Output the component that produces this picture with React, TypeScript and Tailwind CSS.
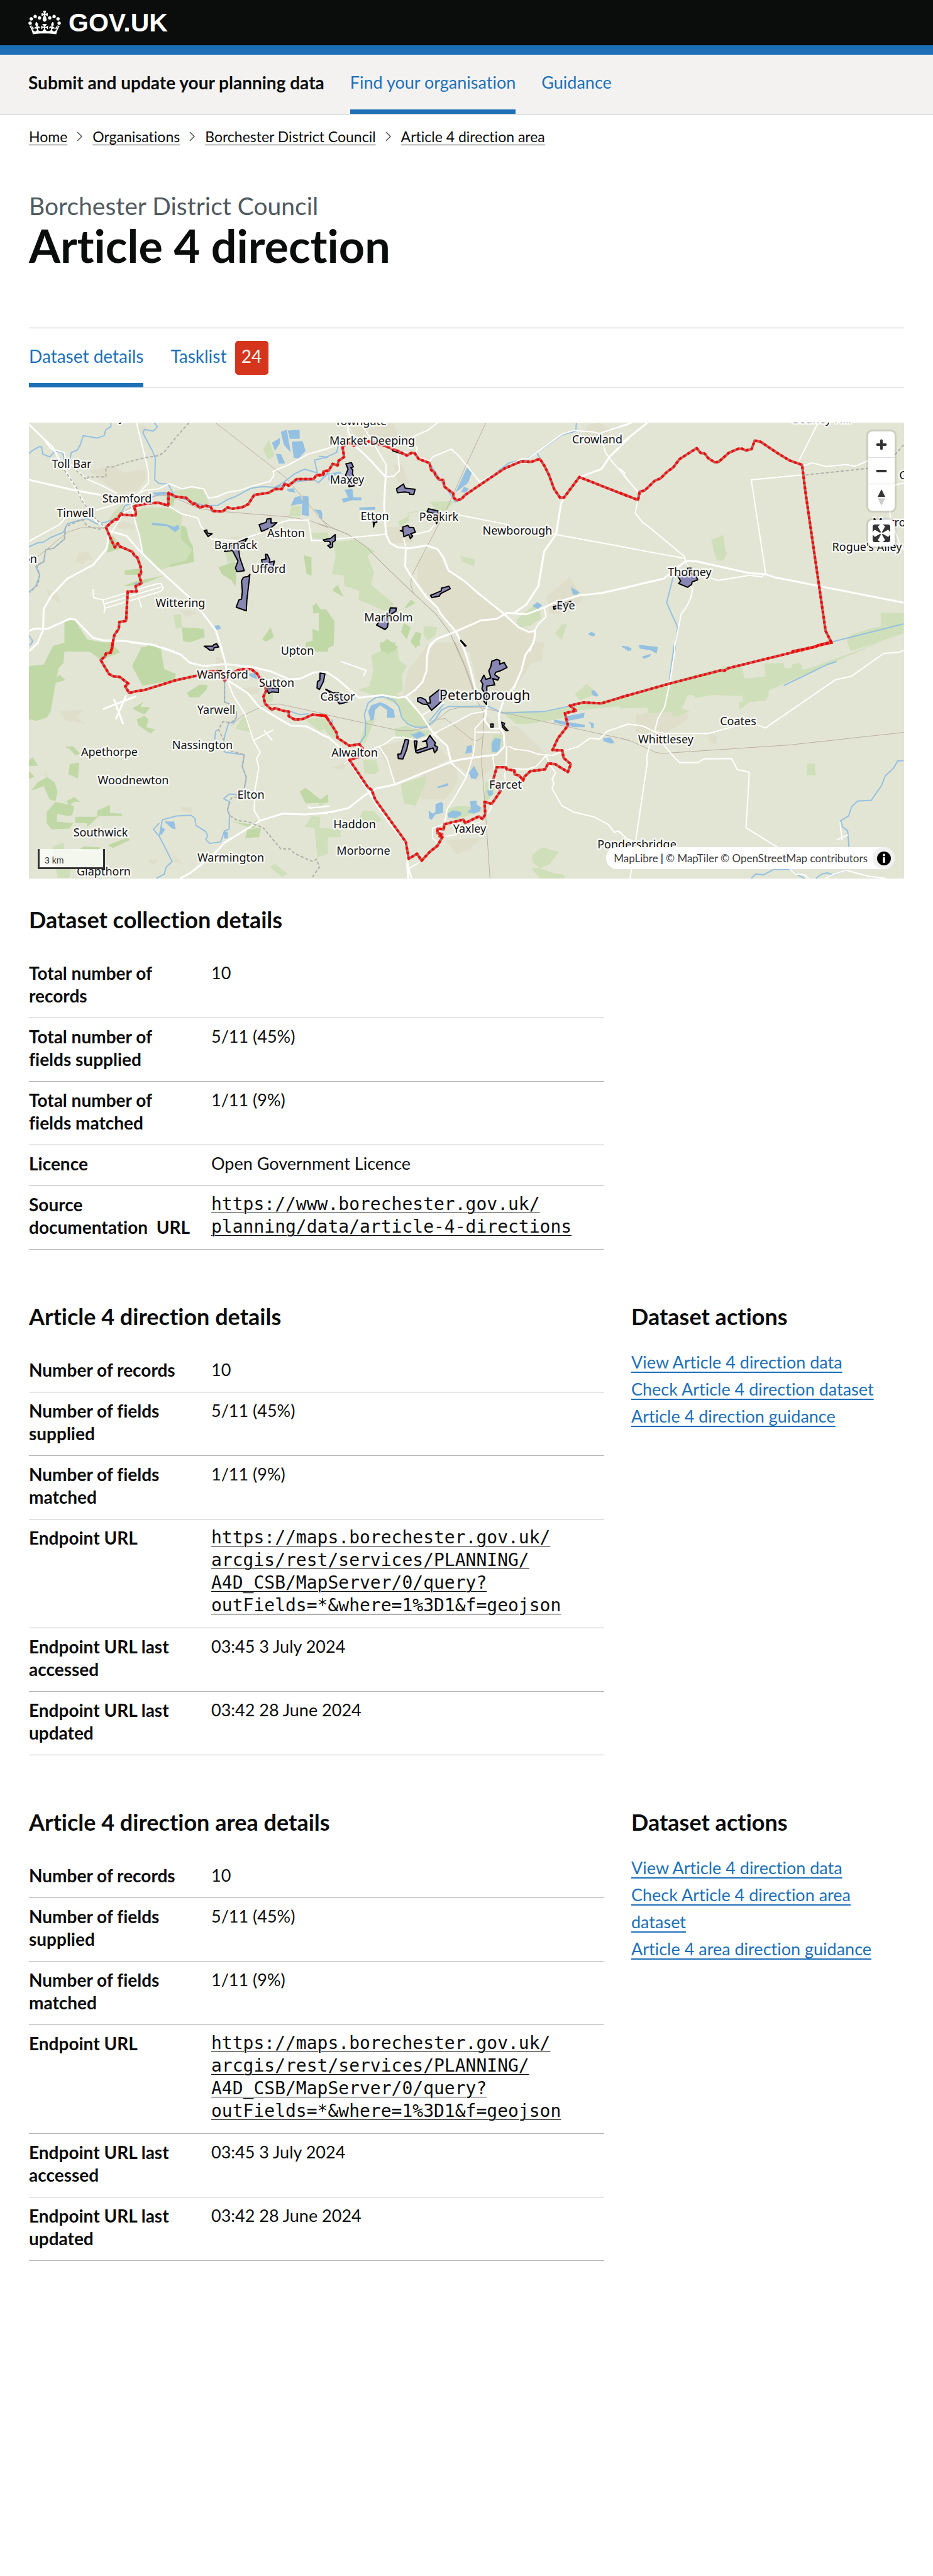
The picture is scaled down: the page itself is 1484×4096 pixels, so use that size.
import React from "react";

type Layer = "town" | "meadow" | "wood" | "water" | "river" | "rail" | "minor" | "major" | "path" | "boundaryBase" | "boundary" | "area";
type Tile = { matrix: string; shapes: Partial<Record<Layer, string>> };

const TILES: Tile[] = [
  {
    matrix: "matrix(.3144 0 0 .2417 -17.4 -13)",
    shapes: {
      town: "M360 370 480 340 540 385 640 360 650 420 600 500 500 510 430 440Z M480 730 540 700 590 730 590 760 520 750Z M310 910 355 905 380 960 340 960 330 990 290 965Z M1040 820 1110 800 1150 830 1080 850Z M820 1290 890 1290 905 1310 850 1335Z M145 1150 200 1170 215 1240 150 1190Z M600 60 650 80 660 120 615 120Z",
      meadow: "M590 640 640 610 760 615 830 660 825 740 865 820 885 870 860 965 765 1005 715 1025 640 930 610 760Z M780 510 850 485 935 490 970 590 900 610 840 540Z M485 640 530 590 520 660 450 710Z M1240 230 1270 165 1298 270 1265 300Z M1385 600 1430 600 1430 670 1370 670Z M1045 900 1085 880 1110 960 1060 975Z M785 1320 825 1315 830 1400 800 1410Z M1485 780 1568 775 1568 825 1490 815Z",
      wood: "M825 730 850 740 865 820 885 870 890 970 765 1005 770 985 850 960 880 890 825 820Z M455 810 480 800 525 880 450 910Z M540 1025 610 1015 615 1055 540 1055Z M530 1130 600 1095 740 1060 640 1110 560 1130Z M235 1360 285 1350 350 1480 470 1510 515 1560 180 1560 235 1510Z M1015 1005 1100 965 1105 1080 1100 1135 1080 1090 1030 1050Z M830 1400 940 1410 945 1465 870 1500 835 1490Z M1235 1480 1278 1400 1295 1465 1255 1495Z M1445 925 1485 940 1485 1060 1460 1050Z M1490 1260 1510 1240 1540 1300 1495 1310Z M1490 1410 1568 1450 1568 1560 1460 1560 1455 1500 1490 1490Z M625 1560 660 1515 720 1530 720 1560Z M745 540 795 550 785 600 765 600Z",
      water: "M1330 115 1360 100 1380 250 1345 200Z M1365 105 1425 100 1425 160 1375 160Z M1385 180 1440 175 1455 240 1420 290 1395 285Z M1285 185 1325 155 1325 190 1300 240Z M1305 260 1330 260 1352 322 1320 325Z M1360 490 1395 485 1403 515 1365 505Z M1400 545 1430 535 1440 585 1380 600Z M1440 535 1470 540 1472 670 1435 660Z M1498 625 1535 630 1540 685Z M675 712 745 720 790 740 810 725 818 750 795 775 755 735 680 728Z M680 515 740 508 785 520 780 530 690 528Z M588 1110 635 1100 610 1130 590 1125Z M995 1390 1018 1385 1027 1410 1002 1418Z",
      river: "M55 260 75 235 110 210 120 215 125 260 160 280 190 240 225 250 235 300 M470 55 470 80 445 100 435 140 400 155 330 140 315 200 300 235 270 250 262 300 M690 55 705 80 685 110 640 98 632 120 655 180 680 240 695 290 692 430 715 455 760 458 785 520 M55 870 100 845 130 840 165 810 230 775 250 720 300 700 350 685 400 720 440 710 510 680 540 600 600 575 740 515 785 520 800 540 870 570 940 600 1010 598 1060 560 1100 540 1180 485 1240 475 1300 480 1340 450 1400 390 1450 360 1515 385 1500 300 1568 280 M1300 480 1420 440 1500 430 1520 450 1568 380 M55 1455 75 1490 60 1520 M240 740 235 820 180 880 140 890 130 970 90 1000 110 1060 90 1130 55 1170",
      rail: "M1000 55 1350 410 1568 740 M100 935 250 775 320 745 440 745 520 650 600 590 700 535 760 530 920 620 1000 635 1380 675 1480 700 1568 745",
      minor: "M130 160 165 225 235 250 240 300 350 425 420 465 500 520 M395 630 520 580 640 500 710 490 765 455 830 490 880 475 940 490 965 550 1010 540 1060 512 1120 500 1200 465 1275 440 1295 400 1290 375 1370 330 1470 260 1568 225 M600 55 635 240 660 380 660 450 610 520 570 560 580 640 600 740 615 800 630 915 M760 600 830 655 910 680 925 735 980 820 1110 830 1230 780 1260 740 1370 695 1470 695 1485 830 1568 830 M55 835 210 725 240 680 M470 780 540 640 590 620 M440 1245 725 1135 M430 1220 700 1115 725 1112 735 1145 720 1165 440 1275 M380 1150 382 1205 430 1220 440 1275 435 1310 M610 1210 625 1270",
      major: "M55 65 175 215 210 300 300 500 350 620 395 700 470 770 500 780 550 800 610 890 720 1030 860 1195 930 1300 1000 1420 1035 1560 M55 430 290 500 420 530 M460 790 450 880 380 990 250 1080 170 1190 130 1280 127 1420 100 1500 60 1555 M55 1425 80 1410 150 1410 260 1345 290 1350 380 1470 430 1485 540 1490 680 1515 790 1560",
      path: "M865 55 830 105 800 150 745 240 715 270 640 285 550 315 480 345 445 345 445 410 355 412 350 430 270 340 M235 365 300 490 320 560 380 670 440 745 410 755 350 735 325 690 240 740 235 820 180 880 140 890 130 970 95 990 110 1060 100 1120 60 1170",
      boundary: "M470 1560 480 1500 488 1450 510 1410 513 1365 547 1358 555 1165 600 1165 595 1130 625 1110 612 1055 623 1050 620 1000 603 940 590 930 578 903 515 868 505 848 490 875 470 820 445 742 490 690 505 690 520 650 530 660 595 665 597 640 585 605 650 587 710 580 760 600 762 515 795 540 850 548 885 590 895 585 920 613 950 600 975 610 985 635 1035 638 1060 612 1085 620 1135 610 1165 590 1195 530 1270 515 1300 490 1335 490 1350 455 1370 468 1410 425 1495 425 1510 400 1545 395 1550 372 1568 372",
      area: "M1220 725 1255 710 1260 688 1280 685 1280 715 1310 712 1285 740 1232 770Z M942 765 955 760 958 780 982 785 962 803Z M1100 850 1160 815 1150 835 1120 850 1115 880 1122 940 1145 1028 1108 1034 1100 1010 1113 965 1085 895 1045 902 1050 880Z M1173 1052 1158 1220 1155 1292 1104 1268 1118 1220 1131 1215 1135 1165 1131 1095 1140 1072 1165 1065Z M1252 920 1262 922 1274 955 1272 972 1297 965 1290 1010 1270 1030 1240 1000 1232 957 1255 952Z M942 1525 985 1525 990 1515 1005 1508 1015 1530 992 1535 990 1550 970 1550 955 1535Z",
    },
  },
  {
    matrix: "matrix(.3144 0 0 .2417 461.1 -13)",
    shapes: {
      town: "M150 60 380 60 400 130 460 170 450 210 390 200 250 170 180 130Z M380 330 420 330 460 460 400 450Z M1360 70 1420 55 1470 90 1440 200 1370 210 1340 160Z M340 740 420 740 480 800 470 840 360 850Z M500 960 560 890 600 890 650 1030 740 1100 940 1320 900 1345 820 1350 690 1420 600 1270 500 1100Z M690 1430 820 1360 940 1330 1090 1430 1090 1560 740 1560Z M1150 1200 1270 1070 1340 1210 1260 1310 1170 1310Z",
      meadow: "M75 840 180 825 285 900 245 930 260 975 280 1040 265 1120 375 1240 375 1290 330 1290 200 1220 205 1160 130 1130 125 1060 65 1050 85 940Z M555 575 690 570 640 640 580 625 455 650 455 700 410 740 400 705 450 670 450 645 590 615Z M715 930 790 955 785 1000 725 970Z M1000 1350 1110 1230 1125 1340 1070 1390 1010 1400Z M1195 1440 1230 1380 1255 1380 1230 1485Z M530 1390 600 1400 590 1450 550 1490 530 1450Z M0 775 50 790 0 820Z",
      wood: "M70 1150 95 1120 125 1200 75 1165Z M435 1270 465 1220 490 1240 440 1275Z M0 1280 35 1280 80 1360 75 1520 0 1560Z M415 1430 430 1370 465 1400 445 1480Z M465 1490 490 1430 520 1440 510 1500 490 1540Z M310 1520 345 1475 400 1530 380 1560 315 1560Z",
      water: "M690 515 750 350 775 380 755 450 720 485Z M720 510 735 475 760 490 740 515Z M130 495 170 490 175 545 215 545 215 565 165 565 125 580 115 555 148 545Z M205 612 285 607 285 628 205 628Z M0 625 18 650 15 690 0 670Z M50 390 110 375 115 390 60 410 55 445 48 430Z M1275 1135 1320 1170 1305 1185 1285 1185Z M1080 1260 1105 1235 1130 1255 1110 1280Z M1365 1440 1380 1430 1400 1445 1390 1462 1365 1450Z M1535 1525 1568 1530 1568 1560Z",
      river: "M1303 55 1300 110 1230 135 1110 245 1055 290 960 320 860 420 740 530 M1105 255 1118 290 M0 275 40 280 90 250 100 200 M0 445 50 385 M560 320 640 480 680 550 690 575 720 560",
      rail: "M845 55 740 350 640 640 470 1060 465 1120 480 1180 M0 675 60 740 150 790 240 870 330 990 470 1165 590 1310 660 1430 705 1560 M0 718 80 755 150 790 240 872 330 992 470 1167 592 1312 662 1432 707 1560",
      minor: "M0 240 90 205 M230 90 290 220 340 330 340 412 380 405 408 370 400 240 450 250 M600 55 550 105 460 155 M495 210 495 240 500 280 560 310 575 280 670 228 710 275 815 445 1020 295 1060 290 1230 130 1290 105 1385 115 1420 125 1450 250 1490 320 1545 400 1568 440 M1420 125 1500 90 1568 65 M700 660 960 725 M1180 785 1568 878 M590 720 560 765 500 785 430 790 430 820 440 875 M0 830 340 788 M1140 1270 1150 1330 1110 1380 1090 1425",
      major: "M145 55 150 120 180 200 260 300 338 412 330 600 340 790 360 845 400 875 460 880 545 862 600 885 630 940 655 1025 740 1100 805 1175 940 1315 1010 1400 1060 1430 1095 1425 1090 1480 1065 1560 M440 880 437 1000 465 1060 540 1195 600 1270 615 1310 695 1430 740 1560 M550 1560 565 1510 600 1475 690 1430 820 1355 900 1345 950 1305 1050 1315 1140 1270 1190 1240 1320 1190 1430 1175 1568 1135 M1568 155 1470 280 1430 360 1385 380 1318 415 M1240 545 1225 590 1200 790 1140 900 1125 1020 1110 1130 1050 1250 990 1305",
      boundary: "M0 400 20 398 25 372 50 370 70 325 95 335 100 305 128 280 120 215 150 185 175 205 250 178 330 205 400 240 445 270 470 252 485 255 505 292 560 320 568 365 585 380 590 400 610 430 630 430 635 475 680 520 683 550 700 565 722 555 740 530 870 415 940 355 1025 308 1075 312 1118 292 1142 340 1165 400 1190 490 1220 547 1240 547 1318 412 1568 540",
      area: "M137 325 165 317 175 345 162 350 172 365 170 390 180 420 178 470 153 475 150 420 135 400 148 360Z M393 490 428 457 437 485 487 492 480 527 460 525 458 515 435 510 398 515Z M555 620 603 635 605 700 595 718 580 650 548 640Z M275 700 295 690 293 710 282 712 277 740Z M412 765 425 762 425 740 450 730 458 743 480 745 488 775 465 785 475 800 463 817 455 790 430 805 427 772Z M22 825 60 815 83 790 83 830 70 840 70 870 58 878 45 862 60 855 55 835 30 835Z M565 1190 585 1180 620 1160 620 1143 658 1130 665 1147 615 1180 610 1195 572 1205Z M362 1272 392 1273 390 1295 370 1310 355 1330 347 1400 335 1415 292 1385 320 1340 355 1310Z M370 230 425 250 427 262 375 240Z M718 1485 745 1522 740 1525 718 1490Z M1187 1265 1200 1260 1275 1230 1270 1245 1190 1282Z",
    },
  },
  {
    matrix: "matrix(.3181 0 0 .2417 939.6 -13)",
    shapes: {
      meadow: "M457 827 518 792 530 905 540 910 520 960 485 962Z M1305 1305 1420 1303 1420 1360 1305 1392Z M1165 1445 1250 1410 1420 1360 1420 1440 1155 1558 1135 1480Z",
      water: "M12 1522 45 1530 60 1550 30 1545Z M97 1515 120 1520 190 1530 185 1560 150 1550 100 1540Z",
      river: "M330 955 340 1000 M267 1070 235 1240 290 1400 275 1560 M1060 1497 1420 1378",
      minor: "M60 55 0 78 M0 355 25 385 20 400 95 515 M92 560 78 650 115 710 150 745 325 935 330 965 345 1010 M0 868 330 948 M990 60 895 310 M915 330 930 335 960 318 1035 342 1130 330 1180 340 1240 305 M910 398 658 430 730 1045 710 1068 650 1058 490 1092 455 1075 M345 1120 365 1145 355 1210 330 1275 308 1310 275 1530 275 1560 M1375 465 1420 450 M1350 635 1355 690 M1375 760 1400 850 1420 890",
      major: "M0 1148 220 1080 330 965 380 965 650 1045 730 1050 770 1070 1000 1130 1420 1238 M138 55 0 200",
      path: "M1420 200 1375 268 M930 398 1240 355",
      boundary: "M0 515 92 563 100 508 125 500 175 437 205 420 235 380 268 348 300 293 385 222 405 253 425 257 443 288 475 315 495 312 545 253 595 225 612 225 630 237 660 228 675 172 705 180 790 255 850 303 912 332 930 520 1030 1425 1058 1497 1000 1515 970 1530 860 1560",
      area: "M290 1062 340 1050 340 1012 358 1012 358 1048 380 1055 390 1088 362 1102 360 1118 340 1137 295 1112 305 1095Z",
    },
  },
  {
    matrix: "matrix(.3144 0 0 .2497 -17.4 349.5)",
    shapes: {
      town: "M210 440 330 430 300 480 345 520 240 495Z M1000 90 1060 110 1050 170 1000 170Z M1130 290 1240 280 1210 330 1160 330Z M820 1045 880 1050 880 1085 830 1070Z M780 1350 845 1415 790 1400Z M650 1385 710 1380 690 1420Z",
      meadow: "M1100 550 1135 475 1160 475 1180 575Z M1250 340 1290 320 1290 370 1260 390Z M1485 1105 1530 1110 1525 1190 1568 1180 1568 1345 1515 1370 1500 1180 1450 1175Z M1275 1430 1300 1410 1365 1475 1335 1495Z M175 1300 230 1275 235 1320 415 1340 415 1430 270 1430 260 1500 200 1500Z M1450 490 1568 470 1568 520 1530 570 1490 530Z",
      wood: "M170 40 180 20 240 0 230 130 205 165 195 230 165 440 145 480 95 500 55 490 55 150 130 140Z M250 0 470 0 515 65 420 110 370 65 270 30Z M625 30 720 20 740 170 800 200 790 240 700 260 630 275 577 150Z M180 240 210 205 240 240 180 260Z M855 320 920 268 960 270 955 300 915 350 865 350Z M580 420 635 378 620 410 670 412 640 460 590 430Z M600 490 640 468 660 490 650 540 695 555 670 580 610 530Z M235 662 280 662 315 710 290 718 260 680Z M55 750 75 730 102 785 55 788Z M262 775 310 765 303 865 255 840Z M135 820 150 860 185 890 200 950 190 1010 160 1000 130 915 65 945 100 890 145 860Z M190 1015 285 1040 275 1100 250 1105 200 1090 195 1140 280 1150 260 1185 170 1190 145 1150 145 1080Z M245 1010 285 985 315 1015 285 1015 260 1040Z M290 1110 400 1110 400 1070 465 1035 465 1085 527 1090 527 1105 410 1105 350 1175 350 1150 290 1150Z M1085 1140 1190 1160 1205 1130 1215 1150 1190 1185Z M1160 1190 1230 1180 1220 1240 1150 1245Z M1425 950 1455 925 1530 1000 1568 965 1568 1020 1455 1025Z M455 1290 560 1240 565 1260 480 1310Z M310 1320 330 1300 415 1305 410 1330Z M55 820 85 855 55 870Z",
      water: "M740 1140 790 1140 798 1188 780 1185Z M725 1175 745 1190 725 1228 718 1210Z M1040 1205 1060 1205 1062 1245 1045 1250Z M1165 200 1200 195 1212 235 1180 220Z",
      river: "M1045 245 1045 380 1075 395 M1105 440 1105 480 1090 510 1065 515 1045 600 1040 640 M1015 555 1000 565 995 620 M1040 690 1050 700 1145 715 1135 790 1155 860 1145 930 M1110 970 1070 965 1040 995 1070 1015 1060 1070 1070 1100 1068 1190 1045 1200 1025 1270 970 1280 950 1255 960 1230 950 1205 900 1165 895 1120 875 1100 800 1105 730 1130 715 1235 685 1190 715 1150 M715 1235 780 1395 750 1430 740 1475 700 1503 M1370 435 1425 460 1470 455",
      rail: "M1080 530 1130 470 1250 400 1320 392 1568 460",
      minor: "M1060 245 1090 340 1150 460 1190 620 1225 700 1207 740 1218 800 1200 930 1195 1070 1225 1135 M1190 625 1290 558 M1245 560 1287 625 M1470 1040 1475 1055 1568 1042",
      major: "M105 0 55 55 M1020 0 1050 130 1060 240 1160 320 1220 410 1380 530 1460 535 1568 605 M570 0 680 15 820 75 870 130 940 150 1050 138 1180 155 1280 185 1370 235 1430 230 1500 190 1568 190 M430 425 597 343 M485 360 532 520 M547 338 495 488 M820 1503 870 1470 990 1350 1045 1275 1225 1135 1340 1090 1450 1095 1568 1085",
      path: "M1045 245 1045 380 1075 395 M1105 440 1105 480 1080 510 1035 505 1015 555 1040 620 M1075 690 1145 715 1135 790 1155 860 1145 930 M1110 985 1080 990 1060 1060 1070 1100 1110 1135 1160 1140 1240 1180 1330 1315 1375 1315 1400 1345 1490 1395 1510 1380 1525 1430 1485 1503",
      boundary: "M478 0 478 30 470 65 445 70 440 90 418 112 460 200 480 215 515 220 558 262 542 280 563 322 600 310 640 303 800 240 910 210 975 182 1030 190 1045 245 1075 200 1110 178 1140 170 1180 170 1210 200 1250 280 1255 310 1242 345 1250 390 1285 430 1300 418 1340 435 1370 440 1370 470 1400 492 1440 488 1490 460 1555 468 1568 488",
      area: "M1528 195 1553 200 1545 250 1525 300 1513 290 1515 250 1527 240Z M1255 290 1318 290 1318 318 1285 315 1268 325Z M1005 178 1030 180 1030 195Z",
    },
  },
  {
    matrix: "matrix(.3144 0 0 .2497 461.1 349.5)",
    shapes: {
      town: "M450 180 560 0 720 0 790 300 620 300 560 350 450 330 385 380 410 420Z M750 0 1140 0 1130 120 1080 130 1050 180 1010 260 960 330 880 300 800 250Z M590 560 820 440 920 540 1000 530 1160 720 1110 800 880 800 800 880 680 760Z M300 660 560 600 660 740 400 900 350 800Z M640 1260 830 1240 760 1320 700 1350Z M560 780 700 780 700 900 640 1000 520 1000 500 880Z M60 800 150 760 120 810Z",
      meadow: "M265 80 330 45 400 40 405 110 445 150 420 205 425 305 390 330 440 350 370 350 260 330 200 300 255 280 275 180Z M430 350 500 440 520 470 570 520 540 545 480 540 430 500 400 400 320 350Z M380 550 440 530 510 560 580 560 540 600 450 615 390 600Z M240 500 290 480 260 560 235 640 205 645Z M870 400 910 440 1140 440 1568 340 1568 400 1250 440 1250 480 1060 520 1000 520 950 470Z M870 640 885 590 935 590 940 660 910 705 870 700Z M415 900 540 850 540 900 490 1040 430 1025Z M225 750 290 750 305 820 280 840 230 835Z M0 1010 45 970 50 1010 0 1050Z M0 1180 120 1190 200 1140 220 1070 280 1075 320 1130 270 1160 110 1200 110 1240 0 1240Z M650 1060 700 1040 830 1050 820 1075 690 1130 650 1100Z M840 890 880 880 890 960 850 1010 838 1000Z M1080 1350 1130 1305 1215 1335 1170 1410 1120 1440 1080 1400Z M1075 1440 1110 1435 1190 1470 1240 1480 1245 1503 1120 1503Z M1295 330 1355 265 1410 320 1380 340 1320 370Z M0 470 60 500 100 620 60 600 0 520Z",
      wood: "M310 0 390 0 375 50 350 75 315 40Z M465 0 510 0 515 20 480 20Z",
      water: "M262 500 250 440 265 400 310 380 340 395 380 430 385 480 345 480 345 430 310 400 285 430 278 490Z M460 580 480 585 510 565 540 590 495 615Z M740 710 750 660 775 655 775 700Z M875 640 890 610 922 615 915 680 900 700 875 695Z M760 830 785 785 808 840 795 870 770 865Z M598 920 655 895 655 912 605 928Z M555 1070 575 1090 590 1080 590 1030 620 1015 630 1030 628 1085 590 1095 570 1130 558 1120Z M652 1090 680 1068 720 1080 720 1100 690 1118 655 1115Z M765 1010 800 1008 798 1030 820 1050 815 1075 785 1090 750 1080 770 1060Z M850 945 880 940 880 970 860 980Z M1190 492 1345 525 1345 540 1290 540 1190 510Z M1255 470 1345 448 1340 480 1260 500Z M1360 505 1390 515 1392 545 1378 545 1375 520Z M1438 608 1475 605 1497 640 1480 645 1440 630Z M1378 310 1390 302 1415 335 1405 345 1385 335Z M1535 22 1568 28 1568 50Z",
      river: "M205 645 235 590 237 510 230 460 250 385 290 350 330 345 380 370 405 410 420 480 450 520 490 540 540 540 590 490 620 430 660 407 730 408 800 405 860 408 930 450 1140 440 1270 405 M560 500 640 378 M65 490 70 510 60 510",
      rail: "M685 0 740 160 800 370 832 440 835 520 822 740 840 1020 866 1503 M689 0 744 160 804 370 M0 450 400 560 470 562 550 540 600 490 660 430 720 412 820 415 1050 480 1568 622 M600 490 640 485 770 615 800 628 830 600",
      minor: "M110 120 240 178 225 215 M520 465 640 380 M580 580 690 510 770 455 840 440 M0 1050 55 1042 M305 662 330 650 380 605 430 605 500 625 560 600 600 570 M305 662 345 740 385 905 M305 662 270 680 M840 480 790 550 790 640 780 720 745 860 700 960 650 1060 635 1155 575 1185 575 1245 600 1275 M795 572 915 572 M668 765 715 820 745 855 M880 720 888 800 M950 660 948 780 940 850 945 880 M960 660 990 680 1060 690 1110 712 1180 720 1240 690 1310 665 1370 610 1420 615 1460 565 1568 520 M888 800 1050 808 1100 790 1150 720 1170 780 1198 830 1180 870 1190 900 1180 930 1230 1040 1290 1080 1390 1110 1465 1160 1495 1210 1515 1200 1568 1260 M875 1030 870 1060 820 1140 760 1170 690 1225 640 1235 M515 1395 455 1440 M130 775 150 750",
      major: "M580 0 560 30 548 80 545 180 525 250 490 300 440 345 M0 190 40 190 90 230 200 350 230 350 M200 352 320 335 400 352 440 345 520 465 580 580 650 660 668 760 M0 1088 60 1080 150 1055 230 975 290 930 385 905 530 830 668 760 720 745 830 725 900 715 940 660 935 580 915 540 910 460 940 350 990 280 1025 180 1045 80 1088 0 M0 580 50 605 100 660 150 750 240 925 290 1030 370 1170 430 1260 445 1310 450 1430 470 1503 M725 0 740 60 765 160 790 290 850 370 850 400 840 500 870 548 915 550 M452 1503 446 1400",
      boundary: "M0 462 35 468 62 520 90 575 95 608 155 658 205 648 222 675 200 730 155 748 248 922 268 940 285 1000 400 1200 440 1270 455 1378 497 1345 520 1390 560 1335 600 1295 625 1240 610 1235 625 1220 600 1215 600 1185 632 1190 635 1158 732 1128 740 1150 810 1108 828 1125 842 1095 838 1015 875 1028 920 945 880 885 900 795 948 795 950 808 990 815 990 840 1015 848 1033 880 1040 855 1070 820 1145 808 1160 770 1195 775 1260 825 1275 775 1238 735 1232 688 1182 685 1210 610 1260 530 1245 450 1302 435 1270 402 1340 382 1430 388 1568 335",
      area: "M35 298 70 320 100 320 145 380 105 392 80 350Z M500 355 515 350 540 365 548 385 565 385 560 350 610 300 640 302 640 350 600 400 570 432 550 395 525 392 500 375Z M437 618 455 622 445 680 425 742 402 740 400 712 415 710Z M483 628 497 628 490 690 550 665 545 630 525 632 545 625 562 592 572 610 590 640 585 655 600 665 598 685 585 703 578 672 500 705 490 697Z M870 520 882 520 882 540 870 540Z M925 508 940 515 935 530 945 545 957 562 945 560 930 540Z M875 120 900 108 915 115 915 138 938 128 952 160 920 180 895 190 890 205 912 225 905 240 880 230 890 270 850 278 850 310 835 315 825 295 830 265 820 245 835 208 845 235 870 225 860 180 870 155Z M835 320 850 310 850 370 848 395 835 375Z",
    },
  },
  {
    matrix: "matrix(.3181 0 0 .2497 939.6 349.5)",
    shapes: {
      town: "M80 460 200 440 350 455 330 500 200 600 80 570Z M440 580 490 600 480 650 450 630Z",
      meadow: "M0 345 250 262 340 218 500 168 520 152 610 150 625 230 730 215 722 135 820 130 825 165 862 160 862 140 905 130 915 175 970 155 1300 0 745 305 745 340 730 370 650 380 600 430 595 375 615 380 615 340 460 335 380 355 370 335 340 335 312 420 350 440 300 465 265 470 262 445 140 450 140 415 0 420Z M937 772 975 770 982 848 935 845Z M1137 0 1300 0 1155 52Z",
      water: "M12 22 60 35 55 55 12 30Z M97 15 190 30 185 72 150 45 100 35Z M112 90 158 72 150 90 120 105Z",
      river: "M275 0 248 240 M820 275 1040 140 1085 122 M1420 753 1390 755 1370 800 1328 850 1310 910 1258 1005 1190 1010 1160 1045 1145 1105 1105 1135 1115 1175 1140 1200 1147 1310 M658 1503 680 1475 720 1480 770 1445 850 1445 890 1480 925 1503 M982 1503 1010 1475 1040 1468 1070 1482 1130 1448",
      rail: "M0 608 60 630 180 700 210 707 850 653 1420 573",
      minor: "M275 0 275 60 250 260 225 410 190 490 175 570 160 565 M0 537 40 520 115 532 180 570 230 580 320 580 445 580 570 535 M690 525 728 545 1080 237 1160 215 1320 70 1400 62 1420 50 M165 580 135 730 138 765 80 1265 M60 1440 52 1503 M220 650 265 720 300 765 390 765 420 742 560 740 588 810 645 825 648 835 632 1180 790 1305 M0 1205 35 1250 80 1270 M1102 1145 1112 1260 M1085 1258 1142 1225 M850 1445 880 1475 925 1480 945 1503 M1030 1503 1055 1485 1130 1450 1240 1488 1330 1503",
      boundary: "M1065 0 1000 18 970 30 540 165 525 180 505 178 250 262 0 352",
    },
  },
];

const LAYERS: { key: Layer; from?: Layer; props: React.SVGProps<SVGPathElement> }[] = [
  { key: "town", props: { fill: "#dfdecb" } },
  { key: "meadow", props: { fill: "#cfdfba" } },
  { key: "wood", props: { fill: "#c0d8a6" } },
  { key: "water", props: { fill: "#94c0e1" } },
  { key: "river", props: { fill: "none", stroke: "#94c0e1", strokeWidth: 2 } },
  { key: "rail", props: { fill: "none", stroke: "#b9afa3", strokeWidth: 1 } },
  { key: "minor", props: { fill: "none", stroke: "#fff", strokeWidth: 2 } },
  { key: "major", props: { fill: "none", stroke: "#fff", strokeWidth: 3 } },
  { key: "path", props: { fill: "none", stroke: "#b0b0ac", strokeWidth: 2, strokeDasharray: "5 3" } },
  { key: "area", props: { fill: "#8887b3", stroke: "#000", strokeWidth: 2 } },
  { key: "boundaryBase", from: "boundary", props: { fill: "none", stroke: "#c05a5a", strokeWidth: 4 } },
  { key: "boundary", props: { fill: "none", stroke: "#ff0000", strokeWidth: 4, strokeDasharray: "4 4" } },
];

const PLACES: [string, number, number][] = [
  ["Toll Bar", 68, 72], ["Stamford", 156, 127], ["Tinwell", 74, 150], ["Duddington", -38, 223], ["Ashton", 409, 182],
  ["Barnack", 329, 201], ["Ufford", 381, 239], ["Wittering", 241, 293], ["Ryhall", 157, -2], ["Towngate", 528, 4],
  ["Market Deeping", 546, 35], ["Maxey", 506, 97], ["Crowland", 904, 33], ["Etton", 550, 155], ["Peakirk", 652, 156],
  ["Newborough", 777, 178], ["Marholm", 572, 316], ["Eye", 854, 297], ["Gedney Hill", 1260, 1], ["Guyhirn", 1418, 90],
  ["Murrow", 1375, 165], ["Rogue's Alley", 1333, 204], ["Thorney", 1051, 244], ["Upton", 427, 369], ["Wansford", 308, 407],
  ["Sutton", 394, 420], ["Yarwell", 298, 463], ["Nassington", 276, 519], ["Apethorpe", 128, 530], ["Woodnewton", 166, 575],
  ["Elton", 353, 598], ["Southwick", 114, 658], ["Warmington", 321, 698], ["Glapthorn", 119, 720], ["Castor", 491, 442],
  ["Alwalton", 518, 531], ["Farcet", 758, 582], ["Haddon", 518, 645], ["Morborne", 532, 687], ["Yaxley", 701, 652],
  ["Coates", 1128, 481], ["Whittlesey", 1013, 510], ["Pondersbridge", 967, 677],
];

function MapCanvas() {
  return (
    <svg viewBox="0 0 1392 725" className="block w-full bg-[#e3e5d4]" role="img" aria-label="Map of Article 4 direction areas">
      {LAYERS.map(({ key, from, props }) =>
        TILES.map((tile, i) => {
          const d = tile.shapes[from ?? key];
          return d ? <path key={key + i} d={d} transform={tile.matrix} vectorEffect="non-scaling-stroke" strokeLinejoin="round" {...props} /> : null;
        }),
      )}
      <g textAnchor="middle" fill="#111" stroke="#fff" strokeOpacity=".75" strokeWidth="5" strokeLinejoin="round" paintOrder="stroke" fontFamily="Noto Sans, sans-serif" fontSize="18">
        {PLACES.map(([name, x, y]) => <text key={name} x={x} y={y}>{name}</text>)}
        <text x="725" y="441" fontSize="22">Peterborough</text>
      </g>
    </svg>
  );
}

const CROWN =
  "M25 30.2c3.5 1.5 7.7-.2 9.1-3.7 1.5-3.6-.2-7.8-3.9-9.2-3.6-1.4-7.6.3-9.1 3.9-1.4 3.5.3 7.5 3.9 9zM9 39.5c3.6 1.5 7.8-.2 9.2-3.7 1.5-3.6-.2-7.8-3.9-9.1-3.6-1.5-7.6.2-9.1 3.8-1.4 3.5.3 7.5 3.8 9zM4.4 57.2c3.5 1.5 7.7-.2 9.1-3.8 1.5-3.6-.2-7.7-3.9-9.1-3.5-1.5-7.6.3-9.1 3.8-1.4 3.5.3 7.6 3.9 9.1zm38.3-21.4c3.5 1.5 7.7-.2 9.1-3.8 1.5-3.6-.2-7.7-3.9-9.1-3.6-1.5-7.6.3-9.1 3.8-1.3 3.6.4 7.7 3.9 9.1zm64.4-5.6c-3.6 1.5-7.8-.2-9.1-3.7-1.5-3.6.2-7.8 3.8-9.2 3.6-1.4 7.7.3 9.2 3.9 1.3 3.5-.4 7.5-3.9 9zm15.9 9.3c-3.6 1.5-7.7-.2-9.1-3.7-1.5-3.6.2-7.8 3.7-9.1 3.6-1.5 7.7.2 9.2 3.8 1.5 3.5-.3 7.5-3.8 9zm4.7 17.7c-3.6 1.5-7.8-.2-9.2-3.8-1.5-3.6.2-7.7 3.9-9.1 3.6-1.5 7.7.3 9.2 3.8 1.3 3.5-.4 7.6-3.9 9.1zM89.3 35.8c-3.6 1.5-7.8-.2-9.2-3.8-1.4-3.6.2-7.7 3.9-9.1 3.6-1.5 7.7.3 9.2 3.8 1.4 3.6-.3 7.7-3.9 9.1zM69.7 17.7l8.9 4.7V9.3l-8.9 2.8c-.2-.3-.5-.6-.9-.9L72.4 0H59.6l3.5 11.2c-.3.3-.6.5-.9.9l-8.8-2.8v13.1l8.8-4.7c.3.3.6.7.9.9l-5 15.4v.1c-.2.8-.4 1.6-.4 2.4 0 4.1 3.1 7.5 7 8.1h.2c.3 0 .7.1 1 .1.4 0 .7 0 1-.1h.2c4-.6 7.1-4.1 7.1-8.1 0-.8-.1-1.7-.4-2.4V34l-5.1-15.4c.4-.2.7-.6 1-.9zM66 92.8c16.9 0 32.8 1.1 47.1 3.2 4-16.9 8.9-26.7 14-33.5l-9.6-3.4c1 4.9 1.1 7.2 0 10.2-1.5-1.4-3-4.3-4.2-8.7L108.6 76c2.8-2 5-3.2 7.5-3.3-4.4 9.4-10 11.9-13.6 11.2-4.3-.8-6.3-4.6-5.6-7.9 1-4.7 5.7-5.9 8-.5 4.3-8.7-3-11.4-7.6-8.8 7.1-7.2 7.9-13.5 2.1-21.1-8 6.1-8.1 12.3-4.5 20.8-4.7-5.4-12.1-2.5-9.5 6.2 3.4-5.2 7.9-2 7.2 3.1-.6 4.3-6.4 7.8-13.5 7.2-10.3-.9-10.9-8-11.2-13.8 2.5-.5 7.1 1.8 11 7.3L80.2 60c-4.1 4.4-8 5.3-12.3 5.4 1.4-4.4 8-11.6 8-11.6H55.5s6.4 7.2 7.9 11.6c-4.2-.1-8-1-12.3-5.4l1.4 16.4c3.9-5.5 8.5-7.7 10.9-7.3-.3 5.8-.9 12.8-11.1 13.8-7.2.6-12.9-2.9-13.5-7.2-.7-5 3.8-8.3 7.1-3.1 2.7-8.7-4.6-11.6-9.4-6.2 3.7-8.5 3.6-14.7-4.6-20.8-5.8 7.6-5 13.9 2.2 21.1-4.7-2.6-11.9.1-7.7 8.8 2.3-5.5 7.1-4.2 8.1.5.7 3.3-1.3 7.1-5.7 7.9-3.5.7-9-1.8-13.5-11.2 2.5.1 4.7 1.3 7.5 3.3l-4.7-15.4c-1.2 4.4-2.7 7.2-4.3 8.7-1.1-3-.9-5.3 0-10.2l-9.5 3.4c5 6.9 9.9 16.7 14 33.5 14.8-2.1 30.8-3.2 47.7-3.2z";

function Chevron() {
  return (
    <svg viewBox="0 0 10 16" className="h-4 w-2.5" fill="none" stroke="#505a5f" strokeWidth="1.5" aria-hidden="true">
      <path d="M1 1l7 7-7 7" />
    </svg>
  );
}

const CRUMBS = ["Home", "Organisations", "Borchester District Council", "Article 4 direction area"];

function MapControls() {
  return (
    <div className="absolute top-[14px] right-[15px] flex flex-col gap-[15px]">
      <div className="flex w-[42px] flex-col divide-y divide-[#ddd] rounded-md bg-white ring-3 ring-black/10">
        <button type="button" aria-label="Zoom in" className="grid h-[42px] place-items-center">
          <svg viewBox="0 0 18 18" className="size-[18px]" stroke="#333" strokeWidth="4" strokeLinecap="round"><path d="M9 2.500v13M2.500 9h13" /></svg>
        </button>
        <button type="button" aria-label="Zoom out" className="grid h-[42px] place-items-center">
          <svg viewBox="0 0 18 18" className="size-[18px]" stroke="#333" strokeWidth="4" strokeLinecap="round"><path d="M2.500 9h13" /></svg>
        </button>
        <button type="button" aria-label="Reset bearing to north" className="grid h-[42px] place-items-center">
          <svg viewBox="0 0 12 26" className="h-[26px] w-3"><path d="M0 12 6 0l6 12z" fill="#333" /><path d="M0 14.500 6 26l6-11.500z" fill="#ccc" /></svg>
        </button>
      </div>
      <button type="button" aria-label="Enter fullscreen" className="grid size-[42px] place-items-center rounded-md bg-white ring-3 ring-black/10">
        <svg viewBox="0 0 28 28" className="size-7" fill="#333">
          {[0, 90, 180, 270].map((a) => (
            <path key={a} transform={`rotate(${a} 14 14)`} d="M3.500 0H12l-3.800 3.300 5 8.700-1.200 1.200-8.700-5L0 12V3.500Q0 0 3.500 0z" />
          ))}
        </svg>
      </button>
    </div>
  );
}

type Row = [React.ReactNode, React.ReactNode];

function UrlLink({ lines }: { lines: string[] }) {
  return (
    <a href="#source" className="inline-block align-top font-['DejaVu_Sans_Mono',monospace] text-[28px] leading-9 underline decoration-1 underline-offset-4">
      {lines.map((l, i) => (
        <React.Fragment key={l}>{i > 0 && <br />}{l}</React.Fragment>
      ))}
    </a>
  );
}

function Summary({ rows }: { rows: Row[] }) {
  return (
    <dl className="leading-9">
      {rows.map(([k, v], i) => (
        <div key={i} className="grid grid-cols-[290px_1fr] border-b border-[#b1b4b6] pt-[11px] pb-[17px]">
          <dt className="pr-6 text-[28px] font-bold">{k}</dt>
          <dd className="text-[27px]">{v}</dd>
        </div>
      ))}
    </dl>
  );
}

function Actions({ links }: { links: string[] }) {
  return (
    <aside>
      <h2 className="mb-[29px] text-4xl leading-[44px] font-bold">Dataset actions</h2>
      <ul className="text-[27px] leading-[43px] text-[#1d70b8]">
        {links.map((l) => (
          <li key={l}><a href="#action" className="underline decoration-2 underline-offset-[5px]">{l}</a></li>
        ))}
      </ul>
    </aside>
  );
}

const ENDPOINT = ["https://maps.borechester.gov.uk/", "arcgis/rest/services/PLANNING/", "A4D_CSB/MapServer/0/query?", "outFields=*&where=1%3D1&f=geojson"];

const DETAIL_ROWS: Row[] = [
  ["Number of records", "10"],
  [<>Number of fields<br />supplied</>, "5/11 (45%)"],
  [<>Number of fields<br />matched</>, "1/11 (9%)"],
  ["Endpoint URL", <UrlLink lines={ENDPOINT} />],
  [<>Endpoint URL last<br />accessed</>, "03:45 3 July 2024"],
  [<>Endpoint URL last<br />updated</>, "03:42 28 June 2024"],
];

const GRID = "grid grid-cols-[915fr_434fr] gap-x-[43px]";

export default function App() {
  return (
    <div className="min-h-screen bg-white font-['Lato',sans-serif] text-[#0b0c0c] [font-variant-ligatures:none]">
      <header>
        <div className="flex h-[87px] items-center border-b-[15px] border-[#1d70b8] bg-[#0b0c0c] px-[45px]">
          <a href="#home" className="flex items-center gap-3 font-['Liberation_Sans',Arial,sans-serif] text-[41px] leading-none font-bold text-white">
            <svg viewBox="0 0 132 97" className="h-[38px] w-[52px]" fill="currentColor" aria-hidden="true"><path d={CROWN} /></svg>
            GOV.UK
          </a>
        </div>
        <nav aria-label="Service" className="flex h-[95px] items-stretch gap-[41px] border-b border-[#b1b4b6] bg-[#f3f2f1] px-[45px] text-[27px] leading-9">
          <a href="#service" className="flex items-center pb-[7px] text-[28px] font-bold">Submit and update your planning data</a>
          <a href="#organisations" aria-current="page" className="flex items-center border-b-[7px] border-[#1d70b8] text-[#1d70b8]">Find your organisation</a>
          <a href="#guidance" className="flex items-center pb-[7px] text-[#1d70b8]">Guidance</a>
        </nav>
      </header>
      <main className="px-[46px]">
        <nav aria-label="Breadcrumb" className="pt-[20px]">
          <ol className="flex items-center gap-[15px] text-[23px] leading-[30px]">
            {CRUMBS.map((c, i) => (
              <li key={c} className="flex items-center gap-[15px]">
                {i > 0 && <Chevron />}
                <a href="#crumb" className="underline decoration-1 underline-offset-4">{c}</a>
              </li>
            ))}
          </ol>
        </nav>
        <h1 className="mt-[70px] text-7xl leading-[76px] font-bold">
          <span className="block text-[39px] leading-[50px] font-normal text-[#505a5f]">Borchester District Council</span>
          Article 4 direction
        </h1>
        <nav aria-label="Dataset" className="mt-[93px] flex h-[95px] items-stretch gap-[43px] border-y border-[#b1b4b6] text-[28px] leading-9 text-[#1d70b8]">
          <a href="#details" aria-current="page" className="-mb-px flex items-center border-b-[7px] border-[#1d70b8]">Dataset details</a>
          <a href="#tasklist" className="flex items-center gap-[13px]">
            <span className="pb-1.5">Tasklist</span>
            <span className="grid h-[54px] w-[53px] place-items-center rounded-[5px] bg-[#d4351c] pb-1.5 text-white">24</span>
          </a>
        </nav>
        <div className="relative mt-14 overflow-hidden">
          <MapCanvas />
          <MapControls />
          <div className="absolute bottom-[15px] left-[14px] h-8 w-[107px] border-[3px] border-t-0 border-[#333] bg-white/75 px-2 font-['Liberation_Sans',Arial,sans-serif] text-sm leading-[36px] text-[#333]">3 km</div>
          <div className="absolute right-[15px] bottom-[15px] flex h-[35px] items-center gap-1 rounded-full bg-white pl-3 text-[17px] text-[#404040]">
            <a href="#maplibre">MapLibre</a>
            <span className="text-black">|</span>
            <a href="#maptiler">© MapTiler</a>
            <a href="#osm">© OpenStreetMap contributors</a>
            <button type="button" aria-label="Toggle attribution" className="ml-1 grid size-[35px] place-items-center rounded-full bg-[#f1f1f1]">
              <svg viewBox="0 0 22 22" className="size-[22px]"><circle cx="11" cy="11" r="11" fill="#000" /><circle cx="11" cy="5.500" r="2" fill="#fff" /><path d="M11 10.500v6" stroke="#fff" strokeWidth="3.500" strokeLinecap="round" /></svg>
            </button>
          </div>
        </div>
        <section className={GRID + " mt-[43px]"}>
          <div>
            <h2 className="mb-[34px] text-4xl leading-[44px] font-bold">Dataset collection details</h2>
            <Summary
              rows={[
                [<>Total number of<br />records</>, "10"],
                [<>Total number of<br />fields supplied</>, "5/11 (45%)"],
                [<>Total number of<br />fields matched</>, "1/11 (9%)"],
                ["Licence", "Open Government Licence"],
                [<>Source<br /><span className="whitespace-nowrap">documentation&nbsp; URL</span></>, <UrlLink lines={["https://www.borechester.gov.uk/", "planning/data/article-4-directions"]} />],
              ]}
            />
          </div>
        </section>
        <section className={GRID + " mt-[84px]"}>
          <div>
            <h2 className="mb-[34px] text-4xl leading-[44px] font-bold">Article 4 direction details</h2>
            <Summary rows={DETAIL_ROWS} />
          </div>
          <Actions links={["View Article 4 direction data", "Check Article 4 direction dataset", "Article 4 direction guidance"]} />
        </section>
        <section className={GRID + " mt-[84px]"}>
          <div>
            <h2 className="mb-[34px] text-4xl leading-[44px] font-bold">Article 4 direction area details</h2>
            <Summary rows={DETAIL_ROWS} />
          </div>
          <Actions links={["View Article 4 direction data", "Check Article 4 direction area dataset", "Article 4 area direction guidance"]} />
        </section>
      </main>
    </div>
  );
}
